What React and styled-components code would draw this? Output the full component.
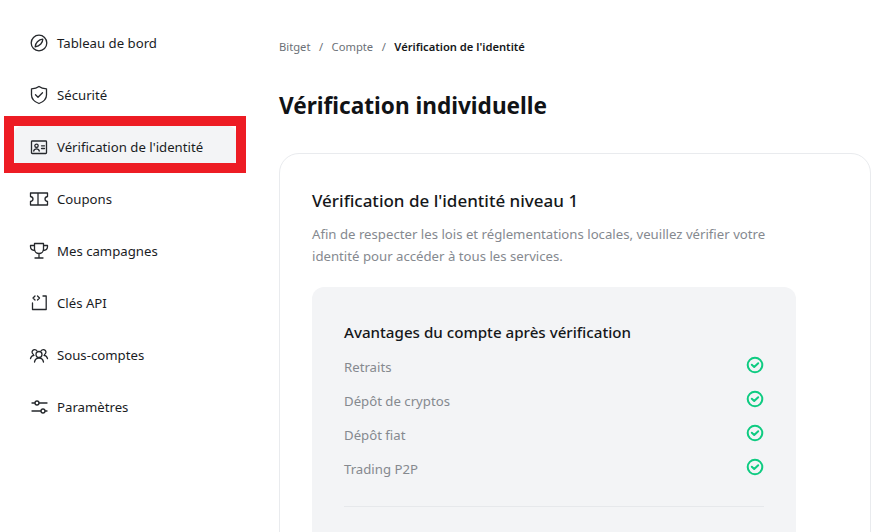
import React from "react";
import styled, { createGlobalStyle } from "styled-components";

const Global = createGlobalStyle`
  html, body { margin: 0; padding: 0; background: #fff; }
  body { font-family: "Noto Sans", "Open Sans", sans-serif; overflow: hidden; }
  * { box-sizing: border-box; }
`;
const Page = styled.div`
  width: 873px; height: 532px; display: flex; overflow: hidden; position: relative; background: #fff;
`;
const Sidebar = styled.nav`
  width: 279px; flex: none; padding: 22px 0 0 14px; display: flex; flex-direction: column; gap: 10px;
`;
const Item = styled.div`
  position: relative; width: 222px; height: 42px; display: flex; align-items: center; gap: 8px; padding-left: 15px;
  border-radius: 8px; font-size: 13.2px; color: #1a1c1f; white-space: nowrap;
  background: ${p => (p.$active ? "#f3f4f6" : "transparent")};
`;
const Highlight = styled.div`
  position: absolute; left: -10px; top: -10px; width: 242px; height: 57px; border: 10px solid #ed1c24;
`;
const IconBox = styled.svg`
  width: 20px; height: 20px; flex: none; fill: none; stroke: #25282c; stroke-width: 1.3; stroke-linecap: round; stroke-linejoin: round;
`;
const Main = styled.main`
  flex: 1; min-width: 0; padding: 37px 0 0 0; display: flex; flex-direction: column;
`;
const Crumbs = styled.div`
  display: flex; gap: 8.5px; font-size: 11.2px; line-height: 20px; color: #6b7076;
`;
const Current = styled.span` color: #15171a; font-weight: 600; `;
const Title = styled.h1`
  margin: 32px 0 0; font-size: 22.6px; line-height: 34px; font-weight: 700; color: #111316;
`;
const Card = styled.section`
  margin-top: 30px; width: 592px; height: 500px; flex: none; border: 1px solid #e9ebee; border-radius: 20px; padding: 32px;
`;
const CardTitle = styled.h2`
  margin: 0; font-size: 17px; line-height: 30px; font-weight: 500; color: #15171a;
`;
const Lead = styled.p`
  margin: 7px 0 0; width: 480px; font-size: 13.2px; line-height: 22px; color: #85898f;
`;
const Panel = styled.div`
  margin-top: 20px; width: 484px; height: 400px; background: #f3f4f6; border-radius: 12px; padding: 32px;
`;
const PanelTitle = styled.h3`
  margin: 0; font-size: 15.15px; line-height: 26px; font-weight: 500; color: #15171a;
`;
const Benefits = styled.ul`
  list-style: none; margin: 10px 0 0; padding: 0 0 25px; display: flex; flex-direction: column; gap: 10px;
  border-bottom: 1px solid #e6e8eb;
`;
const Benefit = styled.li`
  height: 24px; display: flex; justify-content: space-between; align-items: center; font-size: 13.2px; color: #85898f;
`;
const CheckSvg = styled.svg`
  width: 18px; height: 18px; margin-top: -4px; fill: none; stroke: #0ecb81; stroke-width: 2; stroke-linecap: round; stroke-linejoin: round;
`;
const Check = () => (
  <CheckSvg viewBox="0 0 18 18">
    <circle cx="9" cy="9" r="7.3" />
    <path d="M5.8 8.8 8.2 11l4-3.8" />
  </CheckSvg>
);

const icons = {
  dash: <><circle cx="10" cy="10" r="7.8" /><path d="M13.8 6.2C13.800 9.500 11 13 6.200 13.800 6.200 10 9.500 6.500 13.800 6.200z" /></>,
  shield: <><path d="M10 1.500C12 3.200 15 3.800 17.500 3.800V10C17.500 14 14 17 10 18.500 6 17 2.500 14 2.500 10V3.800C5 3.800 8 3.200 10 1.500z" /><path d="M6.500 9.800 9 12.200 13.500 7.800" /></>,
  id: <><rect x="2.500" y="4" width="15" height="12.500" rx=".8" /><circle cx="7.500" cy="8.800" r="1.700" /><path d="M4.700 14c.3-1.500 1.400-2.200 2.800-2.200s2.500.7 2.800 2.200M12.500 8.800h3M12.500 11.500h3" /></>,
  coupon: <path d="M1.500 4H18.500V7.500C17 7.800 16 8.800 16 10S17 12.200 18.500 12.500V16H1.500V12.500C3 12.200 4 11.200 4 10S3 7.800 1.500 7.500zM9 4V16" />,
  trophy: <path d="M5.500 2.500h9v5.500a4.500 4.500 0 0 1-9 0zM5.500 4.500H1.500v1.200c0 2 1.500 3.600 4.400 3.800M14.500 4.500h4v1.200c0 2-1.500 3.600-4.400 3.800M10 12.500v4M6 17h8" />,
  api: <path d="M14 3h3.200v13.500H3.500V10M6 3 4 5l2 2M8.500 3l2 2-2 2" />,
  subs: <><circle cx="10" cy="9.500" r="3" /><path d="M5.500 17C6 14.500 8 13 10 13s4 1.500 4.500 4M7.800 5.700A2.600 2.600 0 1 0 4.500 9.500M12.200 5.700A2.600 2.600 0 1 1 15.500 9.500M1.500 13.500C2 11.500 3.200 10.500 5 10.300M18.500 13.500C18 11.500 16.800 10.500 15 10.300" /></>,
  set: <><path d="M3 6h3M10 6h8M3 14h9M16 14h2" /><circle cx="8" cy="6" r="2" /><circle cx="14" cy="14" r="2" /></>,
};
const nav = [
  ["dash", "Tableau de bord"], ["shield", "Sécurité"], ["id", "Vérification de l'identité"], ["coupon", "Coupons"],
  ["trophy", "Mes campagnes"], ["api", "Clés API"], ["subs", "Sous-comptes"], ["set", "Paramètres"],
];

export default function App() {
  return (
    <Page>
      <Global />
      <Sidebar>
        {nav.map(([k, label]) => (
          <Item key={k} $active={k === "id"}>
            <IconBox viewBox="0 0 20 20">{icons[k]}</IconBox>
            {label}
            {k === "id" && <Highlight />}
          </Item>
        ))}
      </Sidebar>
      <Main>
        <Crumbs><span>Bitget</span><span>/</span><span>Compte</span><span>/</span><Current>Vérification de l'identité</Current></Crumbs>
        <Title>Vérification individuelle</Title>
        <Card>
          <CardTitle>Vérification de l'identité niveau 1</CardTitle>
          <Lead>Afin de respecter les lois et réglementations locales, veuillez vérifier votre identité pour accéder à tous les services.</Lead>
          <Panel>
            <PanelTitle>Avantages du compte après vérification</PanelTitle>
            <Benefits>
              {["Retraits", "Dépôt de cryptos", "Dépôt fiat", "Trading P2P"].map(t => (
                <Benefit key={t}>{t}<Check /></Benefit>
              ))}
            </Benefits>
          </Panel>
        </Card>
      </Main>
    </Page>
  );
}
